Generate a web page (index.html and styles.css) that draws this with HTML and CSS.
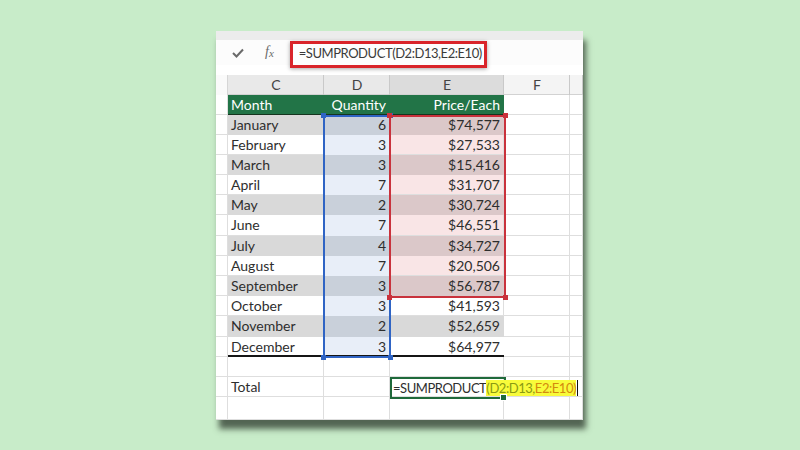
FILE: index.html
```html
<!DOCTYPE html>
<html>
<head>
<meta charset="utf-8">
<link rel="stylesheet" href="styles.css">
</head>
<body>
<div class="card">
  <div class="strip"></div>
  <div class="fbar">
    <svg class="check" width="12" height="10" viewBox="0 0 12 10"><polyline points="1,5 4.5,8.5 11,1.5" fill="none" stroke="#6a6a6a" stroke-width="2"/></svg>
    <span class="fx">f<span class="fxx">x</span></span>
    <div class="fbox">=SUMPRODUCT(D2:D13,E2:E10)</div>
  </div>
  <div class="gap"></div>
  <div class="sheet">
    <div class="row colhdr">
      <div class="rh"></div>
      <div class="c">C</div>
      <div class="d">D</div>
      <div class="e">E</div>
      <div class="f">F</div>
      <div class="g"></div>
    </div>
    <div class="row head">
      <div class="rh"></div>
      <div class="c">Month</div>
      <div class="d num">Quantity</div>
      <div class="e num">Price/Each</div>
      <div class="f"></div>
      <div class="g"></div>
    </div>
    <div class="row data odd sel"><div class="rh"></div><div class="c">January</div><div class="d num">6</div><div class="e num">$74,577</div><div class="f"></div><div class="g"></div></div>
    <div class="row data even sel"><div class="rh"></div><div class="c">February</div><div class="d num">3</div><div class="e num">$27,533</div><div class="f"></div><div class="g"></div></div>
    <div class="row data odd sel"><div class="rh"></div><div class="c">March</div><div class="d num">3</div><div class="e num">$15,416</div><div class="f"></div><div class="g"></div></div>
    <div class="row data even sel"><div class="rh"></div><div class="c">April</div><div class="d num">7</div><div class="e num">$31,707</div><div class="f"></div><div class="g"></div></div>
    <div class="row data odd sel"><div class="rh"></div><div class="c">May</div><div class="d num">2</div><div class="e num">$30,724</div><div class="f"></div><div class="g"></div></div>
    <div class="row data even sel"><div class="rh"></div><div class="c">June</div><div class="d num">7</div><div class="e num">$46,551</div><div class="f"></div><div class="g"></div></div>
    <div class="row data odd sel"><div class="rh"></div><div class="c">July</div><div class="d num">4</div><div class="e num">$34,727</div><div class="f"></div><div class="g"></div></div>
    <div class="row data even sel"><div class="rh"></div><div class="c">August</div><div class="d num">7</div><div class="e num">$20,506</div><div class="f"></div><div class="g"></div></div>
    <div class="row data odd sel"><div class="rh"></div><div class="c">September</div><div class="d num">3</div><div class="e num">$56,787</div><div class="f"></div><div class="g"></div></div>
    <div class="row data even"><div class="rh"></div><div class="c">October</div><div class="d num">3</div><div class="e num">$41,593</div><div class="f"></div><div class="g"></div></div>
    <div class="row data odd"><div class="rh"></div><div class="c">November</div><div class="d num">2</div><div class="e num">$52,659</div><div class="f"></div><div class="g"></div></div>
    <div class="row data even last"><div class="rh"></div><div class="c">December</div><div class="d num">3</div><div class="e num">$64,977</div><div class="f"></div><div class="g"></div></div>
    <div class="row blank1"><div class="rh"></div><div class="c"></div><div class="d"></div><div class="e"></div><div class="f"></div><div class="g"></div></div>
    <div class="row total"><div class="rh"></div><div class="c">Total</div><div class="d"></div><div class="e"></div><div class="f"></div><div class="g"></div></div>
    <div class="row blank2"><div class="rh"></div><div class="c"></div><div class="d"></div><div class="e"></div><div class="f"></div><div class="g"></div></div>

    <div class="selbox sel-d"><span class="h tl"></span><span class="h tr"></span><span class="h bl"></span><span class="h br"></span></div>
    <div class="selbox sel-e"><span class="h tl"></span><span class="h tr"></span><span class="h bl"></span><span class="h br"></span></div>
    <div class="active"><span class="atext">=SUMPRODUCT<span class="hl"><span class="r1">(D2:D13,</span><span class="r2">E2:E10)</span></span><span class="caret"></span></span><span class="ah"></span></div>
  </div>
</div>
</body>
</html>
```
FILE: styles.css
```css
html, body {
  margin: 0;
  padding: 0;
}
body {
  background: #c8ecc9;
  width: 800px;
  height: 450px;
  display: flex;
  align-items: center;
  justify-content: center;
  font-family: Lato, "Noto Sans", sans-serif;
  color: #2e2e2e;
}
.card {
  width: 367px;
  height: 389px;
  margin-left: -1px;
  background: #ffffff;
  box-shadow: 3px 9px 6px rgba(62, 78, 62, 0.85);
  display: flex;
  flex-direction: column;
}
.strip {
  height: 9px;
  background: #ececec;
}
.fbar {
  height: 25px;
  display: flex;
  align-items: flex-start;
  background: #fcfcfc;
}
.check {
  margin: 8px 0 0 16px;
}
.fx {
  font-family: "Liberation Serif", "DejaVu Serif", serif;
  font-style: italic;
  font-size: 14px;
  color: #6a6a6a;
  margin: 3px 0 0 21px;
  line-height: 18px;
}
.fxx {
  font-size: 11px;
  position: relative;
  top: 1px;
}
.fbox {
  position: relative;
  z-index: 2;
  margin: 1px 0 0 16px;
  width: 197px;
  height: 27px;
  box-sizing: border-box;
  border: 3px solid #d9242a;
  background: #fdfdfd;
  box-shadow: 0 1px 4px rgba(0, 0, 0, 0.35);
  font-size: 13px;
  letter-spacing: -0.45px;
  line-height: 19px;
  padding-left: 6px;
  color: #3a3a3a;
  white-space: nowrap;
}
.gap {
  height: 10px;
}
.sheet {
  position: relative;
  flex: 1;
  display: flex;
  flex-direction: column;
}
.row {
  display: flex;
  height: 20.2px;
  font-size: 14px;
  line-height: 20px;
}
.row > div {
  box-sizing: border-box;
  white-space: nowrap;
  overflow: hidden;
  box-shadow: inset -1px -1px 0 #dedede;
}
.rh { width: 12px; }
.c { width: 96px; padding-left: 3px; }
.d { width: 66px; }
.e { width: 114px; }
.f { width: 66px; }
.g { flex: 1; }
.num { text-align: right; padding-right: 4px; }

.colhdr { height: 20px; color: #444; }
.colhdr > div { text-align: center; padding: 0; background: #e9e9e9; box-shadow: inset -1px 0 0 #c9c9c9, inset 0 -1px 0 #d2d2d2; }
.colhdr .rh { background: #fafafa; box-shadow: inset -1px 0 0 #d6d6d6; }
.colhdr .e { background: #dcdcdc; }
.colhdr .f, .colhdr .g { background: #f4f4f4; }

.head { height: 20px; }
.head .c, .head .d, .head .e {
  background: #227447;
  color: #ffffff;
  box-shadow: inset 0 -1px 0 #16351f;
}

.data .c, .data .d, .data .e { box-shadow: none; }
.odd .c { background: #d9d9d9; }
.odd .d { background: #c9d0da; }
.odd .e { background: #d9d9d9; }
.even .d { background: #e8eef8; }
.even .e { box-shadow: inset -1px -1px 0 #dedede; }
.even .c { box-shadow: inset 0 -1px 0 #dedede; }
.odd.sel .e { background: #dbc8c9; }
.even.sel .e { background: #f9e5e6; }
.last .c, .last .d, .last .e { box-shadow: inset 0 -2px 0 #151515; }

.blank1 { height: 20.6px; }
.total { height: 20px; }
.blank2 { flex: 1; }

.selbox {
  position: absolute;
  box-sizing: border-box;
  border: 2px solid;
}
.sel-d {
  left: 107px;
  top: 40px;
  width: 68px;
  height: 243px;
  border-color: #2f64c4;
}
.sel-e {
  left: 173px;
  top: 40px;
  width: 117px;
  height: 183px;
  border-color: #c9323c;
}
.h {
  position: absolute;
  width: 5px;
  height: 5px;
}
.sel-d .h { background: #2f64c4; }
.sel-e .h { background: #c9323c; }
.tl { left: -4px; top: -4px; }
.tr { right: -4px; top: -4px; }
.bl { left: -4px; bottom: -4px; }
.br { right: -4px; bottom: -4px; }

.active {
  position: absolute;
  left: 174px;
  top: 302.6px;
  width: 116px;
  height: 22px;
  box-sizing: border-box;
  border: 2px solid #1f6a3b;
  font-size: 13px;
  letter-spacing: -0.45px;
  line-height: 18px;
  white-space: nowrap;
}
.atext {
  display: inline-block;
  padding-left: 1px;
  color: #2e2e2e;
}
.hl {
  background: #f8fb3a;
}
.r1 { color: #8a9a12; }
.r2 { color: #d38a0e; }
.caret {
  display: inline-block;
  width: 1px;
  height: 16px;
  background: #111;
  vertical-align: -3px;
  margin-left: 1px;
}
.ah {
  position: absolute;
  right: -3px;
  bottom: -4px;
  width: 5px;
  height: 5px;
  background: #1f6a3b;
  border: 1px solid #fff;
}
```
